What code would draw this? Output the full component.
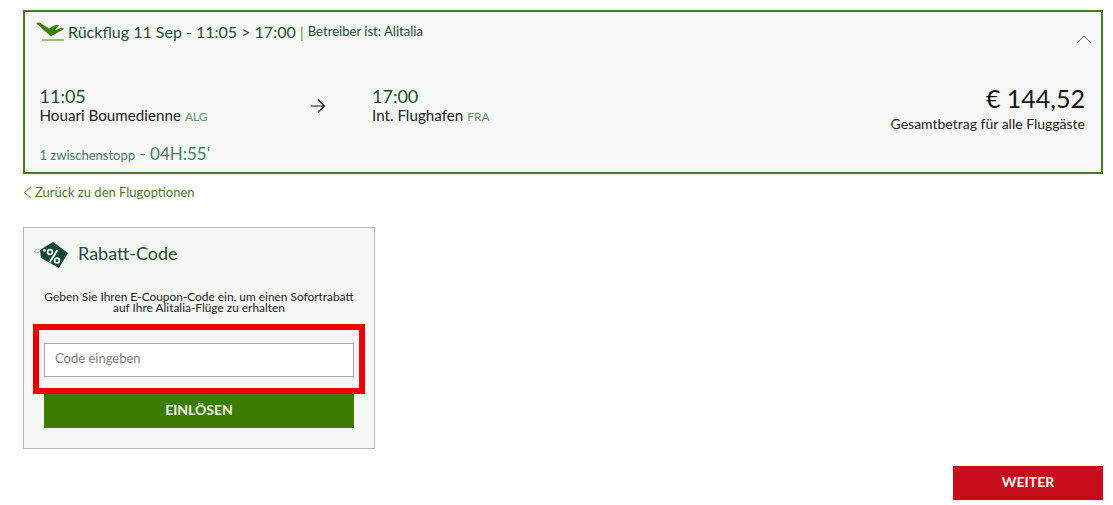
<script>
  const legs = [
    { time: '11:05', place: 'Houari Boumedienne', code: 'ALG' },
    { time: '17:00', place: 'Int. Flughafen', code: 'FRA' }
  ]
</script>

<div class="page">
  <section class="flight">
    <header class="flight-head">
      <svg class="plane" width="30" height="20" viewBox="0 0 30 20">
        <path d="M0 2 L3.5 1.4 L13 7.6 L20 3.8 L23 4.4 L18.5 9.4 L26 6.4 L28 8 L15 15.5 Z" fill="#3a7d0a" />
        <rect x="6" y="18.5" width="22" height="1" fill="#3a7d0a" />
      </svg>
      <span class="flight-title">Rückflug 11 Sep - 11:05 &gt; 17:00</span>
      <span class="sep">|</span>
      <span class="operator">Betreiber ist: Alitalia</span>
      <svg class="chevron" width="16" height="9" viewBox="0 0 16 9">
        <path d="M1 8 L8 1 L15 8" fill="none" stroke="#555" stroke-width="1" />
      </svg>
    </header>

    <div class="flight-body">
      <div class="leg">
        <div class="time">{legs[0].time}</div>
        <div class="place">{legs[0].place} <span class="code">{legs[0].code}</span></div>
      </div>
      <svg class="arrow" width="16" height="16" viewBox="0 0 16 16">
        <path d="M1 8 H14 M8 1.5 L14.5 8 L8 14.5" fill="none" stroke="#111" stroke-width="1.2" />
      </svg>
      <div class="leg">
        <div class="time">{legs[1].time}</div>
        <div class="place">{legs[1].place} <span class="code">{legs[1].code}</span></div>
      </div>
      <div class="price">
        <div class="amount">€ 144,52</div>
        <div class="amount-label">Gesamtbetrag für alle Fluggäste</div>
      </div>
    </div>

    <div class="duration"><span class="stops">1 zwischenstopp</span> - 04H:55'</div>
  </section>

  <a class="back" href="#back">
    <svg width="9" height="13" viewBox="0 0 9 13">
      <path d="M8 0.8 L1.5 6.5 L8 12.2" fill="none" stroke="#3a7d0a" stroke-width="1" />
    </svg>
    Zurück zu den Flugoptionen
  </a>

  <section class="coupon">
    <div class="coupon-head">
      <svg class="tag" width="36" height="28" viewBox="0 0 36 28">
        <path d="M6 10 C4 8.5 1 9.5 0.5 11.5 C2 13 5 12.5 7 11.5" fill="none" stroke="#999" stroke-width="0.8" />
        <path d="M6 10 L19 2 L34 13 L25 28 L7 18 Z" fill="#0f4a32" />
        <circle cx="10.5" cy="10.5" r="1.4" fill="#fff" />
        <circle cx="16" cy="12" r="2.4" fill="none" stroke="#fff" stroke-width="1.6" />
        <circle cx="23" cy="20.5" r="2.4" fill="none" stroke="#fff" stroke-width="1.6" />
        <path d="M23.5 10 L15.5 22.5" stroke="#fff" stroke-width="1.9" />
      </svg>
      <h2>Rabatt-Code</h2>
    </div>
    <p>Geben Sie Ihren E-Coupon-Code ein, um einen Sofortrabatt<br />auf Ihre Alitalia-Flüge zu erhalten</p>
    <div class="field">
      <input type="text" placeholder="Code eingeben" />
      <div class="highlight"></div>
    </div>
    <button class="redeem">EINLÖSEN</button>
  </section>

  <div class="actions">
    <button class="next">WEITER</button>
  </div>
</div>

<style>
  :global(body) {
    margin: 0;
    background: #fff;
    font-family: Lato, "Open Sans", sans-serif;
  }

  .page {
    width: 1080px;
    padding: 10px 10px 0 23px;
  }

  .flight {
    box-sizing: border-box;
    height: 164px;
    border: 2px solid #4a7a1e;
    background: #f8f8f8;
    padding: 7px 16px 0 15px;
    color: #1f4a33;
  }

  .flight-head {
    display: flex;
    align-items: center;
    height: 24px;
    margin-left: -4px;
  }

  .plane {
    margin-right: 2px;
  }

  .flight-title {
    font-size: 16px;
  }

  .sep {
    margin: 0 4px 0 4px;
    font-size: 16px;
    color: #6a8f4f;
  }

  .operator {
    font-size: 13.1px;
  }

  .chevron {
    margin-left: auto;
    margin-top: 17px;
    margin-right: -7px;
  }

  .flight-body {
    display: flex;
    align-items: flex-start;
    margin-top: 39px;
  }

  .leg {
    width: 270px;
    margin-top: 4px;
    margin-left: -0.5px;
  }

  .leg:nth-child(3) {
    width: 300px;
  }

  .time {
    font-size: 18px;
    line-height: 20px;
  }

  .place {
    font-size: 15.2px;
    line-height: 19px;
    color: #222;
  }

  .code {
    font-size: 12px;
    color: #5f9a5c;
  }

  .arrow {
    margin: 16px 46.5px 0 0.5px;
  }

  .price {
    margin-left: auto;
    text-align: right;
    margin-top: 0;
  }

  .amount {
    font-size: 25px;
    line-height: 32px;
    color: #111;
  }

  .amount-label {
    font-size: 14px;
    line-height: 20px;
    color: #222;
  }

  .duration {
    margin-top: 9px;
    margin-left: -0.5px;
    font-size: 17px;
    line-height: 22px;
    color: #41805f;
  }

  .stops {
    font-size: 13px;
  }

  .back {
    display: flex;
    align-items: center;
    gap: 3px;
    height: 36px;
    font-size: 13px;
    color: #4a7a1e;
    text-decoration: none;
    margin-bottom: 17px;
  }

  .coupon {
    position: relative;
    box-sizing: border-box;
    width: 352px;
    height: 222px;
    border: 1px solid #b5b5b5;
    background: #f5f7f4;
    padding: 0 20px;
  }

  .coupon-head {
    display: flex;
    align-items: center;
    gap: 8px;
    height: 50px;
    margin-left: -10px;
  }

  .tag {
    margin-top: 2px;
  }

  h2 {
    margin: 0;
    font-size: 18px;
    font-weight: 400;
    color: #1f4a33;
  }

  p {
    margin: 13px 0 0;
    text-align: center;
    font-size: 11.9px;
    line-height: 11px;
    color: #222;
    white-space: nowrap;
  }

  .field {
    position: relative;
    margin-top: 30px;
  }

  input {
    display: block;
    box-sizing: border-box;
    width: 310px;
    height: 34px;
    border: 1px solid #aaa;
    background: #fff;
    padding: 0 10px 5px;
    font-family: inherit;
    font-size: 13px;
    outline: none;
  }

  input::placeholder {
    color: #808080;
  }

  .highlight {
    position: absolute;
    inset: -19px -11px -17px -11px;
    border: 6px solid #ee0000;
  }

  .redeem {
    display: block;
    width: 310px;
    height: 34px;
    margin-top: 17px;
    padding: 0 0 3px;
    border: none;
    background: #3a7d02;
    color: #f1f5e5;
    font-family: inherit;
    font-size: 14px;
    font-weight: 700;
  }

  .actions {
    display: flex;
    justify-content: flex-end;
    margin-top: 17px;
  }

  .next {
    width: 150px;
    height: 34px;
    padding: 0 0 3px;
    border: none;
    background: #c60c1a;
    color: #fff;
    font-family: inherit;
    font-size: 14px;
    font-weight: 700;
  }
</style>
